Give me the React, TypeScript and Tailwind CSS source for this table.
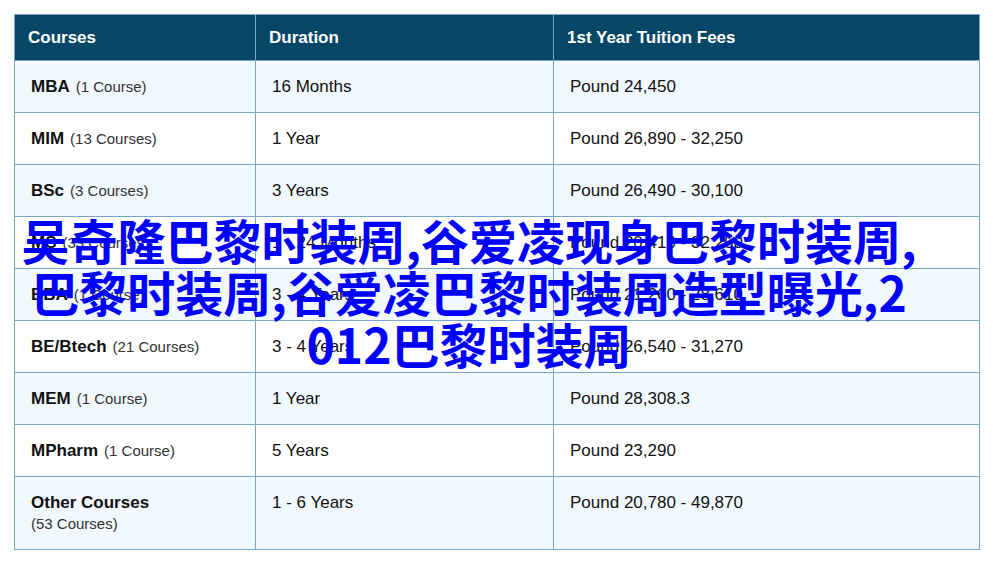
import React from 'react';

const rows = [
  { name: 'MBA', count: '(1 Course)', duration: '16 Months', fee: 'Pound 24,450' },
  { name: 'MIM', count: '(13 Courses)', duration: '1 Year', fee: 'Pound 26,890 - 32,250' },
  { name: 'BSc', count: '(3 Courses)', duration: '3 Years', fee: 'Pound 26,490 - 30,100' },
  { name: 'MS', count: '(33 Courses)', duration: '1 - 24 Months', fee: 'Pound 20,410 - 32,250' },
  { name: 'BBA', count: '(1 Course)', duration: '3 - 4 Years', fee: 'Pound 21,260 - 28,610' },
  { name: 'BE/Btech', count: '(21 Courses)', duration: '3 - 4 Years', fee: 'Pound 26,540 - 31,270' },
  { name: 'MEM', count: '(1 Course)', duration: '1 Year', fee: 'Pound 28,308.3' },
  { name: 'MPharm', count: '(1 Course)', duration: '5 Years', fee: 'Pound 23,290' },
  { name: 'Other Courses', count: '(53 Courses)', duration: '1 - 6 Years', fee: 'Pound 20,780 - 49,870', wrap: true },
];

const cell = 'border border-[#79a6c4] px-[16px] pt-[16px] pb-[15px] align-top text-[17px] leading-[20px]';
const head = 'border border-[#79a6c4] px-[13px] text-left text-[17px] leading-[20px] font-bold';

export default function App() {
  return (
    <div className="relative w-[993px] h-[570px] bg-white pl-[14px] pt-[14px] font-['Liberation_Sans',Arial,sans-serif] text-[#111]">
      <table className="table-fixed border-collapse w-[965px]">
        <colgroup>
          <col className="w-[241px]" />
          <col className="w-[298px]" />
          <col className="w-[426px]" />
        </colgroup>
        <thead>
          <tr className="bg-[#064666] text-white h-[46px]">
            <th className={head}>Courses</th>
            <th className={head}>Duration</th>
            <th className={head}>1st Year Tuition Fees</th>
          </tr>
        </thead>
        <tbody>
          {rows.map((r, i) => (
            <tr key={r.name} className={i % 2 === 0 ? 'bg-[#f1f8fe]' : 'bg-white'}>
              <td className={cell}>
                <span className="font-bold">{r.name}</span>
                {r.wrap ? (
                  <span className="block text-[15px] leading-[21px] text-[#333]">{r.count}</span>
                ) : (
                  <span className="ml-[6px] text-[15px] text-[#333]">{r.count}</span>
                )}
              </td>
              <td className={cell}>{r.duration}</td>
              <td className={cell}>{r.fee}</td>
            </tr>
          ))}
        </tbody>
      </table>
      <div className="absolute left-0 top-[213px] w-[938px] text-center text-[48px] leading-[52px] font-bold text-[#0000ff] font-['Noto_Sans_CJK_SC','Noto_Sans',sans-serif] whitespace-nowrap">
        <span className="block">吴奇隆巴黎时装周,谷爱凌现身巴黎时装周,</span>
        <span className="block">巴黎时装周,谷爱凌巴黎时装周造型曝光,2</span>
        <span className="block">012巴黎时装周</span>
      </div>
    </div>
  );
}
